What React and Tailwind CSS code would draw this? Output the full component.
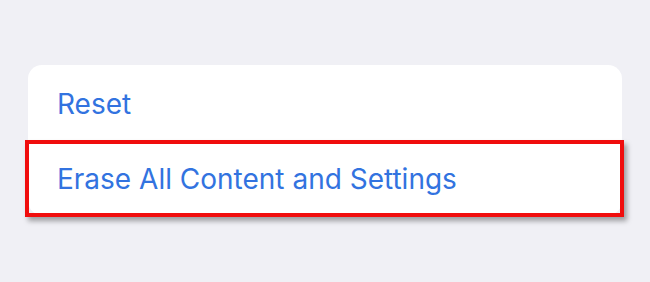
import React from 'react';

// Settings list with the "Erase" row highlighted
const App = () => {
  return (
    <div className="w-[650px] h-[282px] bg-[#f0f0f5] pt-[65px] px-[28px] font-['Inter','Noto_Sans',sans-serif]">
      <div className="bg-white rounded-t-[14px] rounded-b-[14px]">
        <div className="h-[75px] flex items-center pl-[29px] pt-[2px] text-[28px] text-[#3273e0]">
          Reset
        </div>
        <div className="relative h-[75px] flex items-center pl-[29px] pt-[2px] text-[28px] text-[#3273e0]">
          Erase All Content and Settings
          {/* red highlight box */}
          <div className="absolute -left-[3px] -right-[2px] top-0 -bottom-[2px] border-[4px] border-[#f00d0d] shadow-[3px_4px_5px_rgba(0,0,0,0.35)]"></div>
        </div>
      </div>
    </div>
  );
};

export default App;
